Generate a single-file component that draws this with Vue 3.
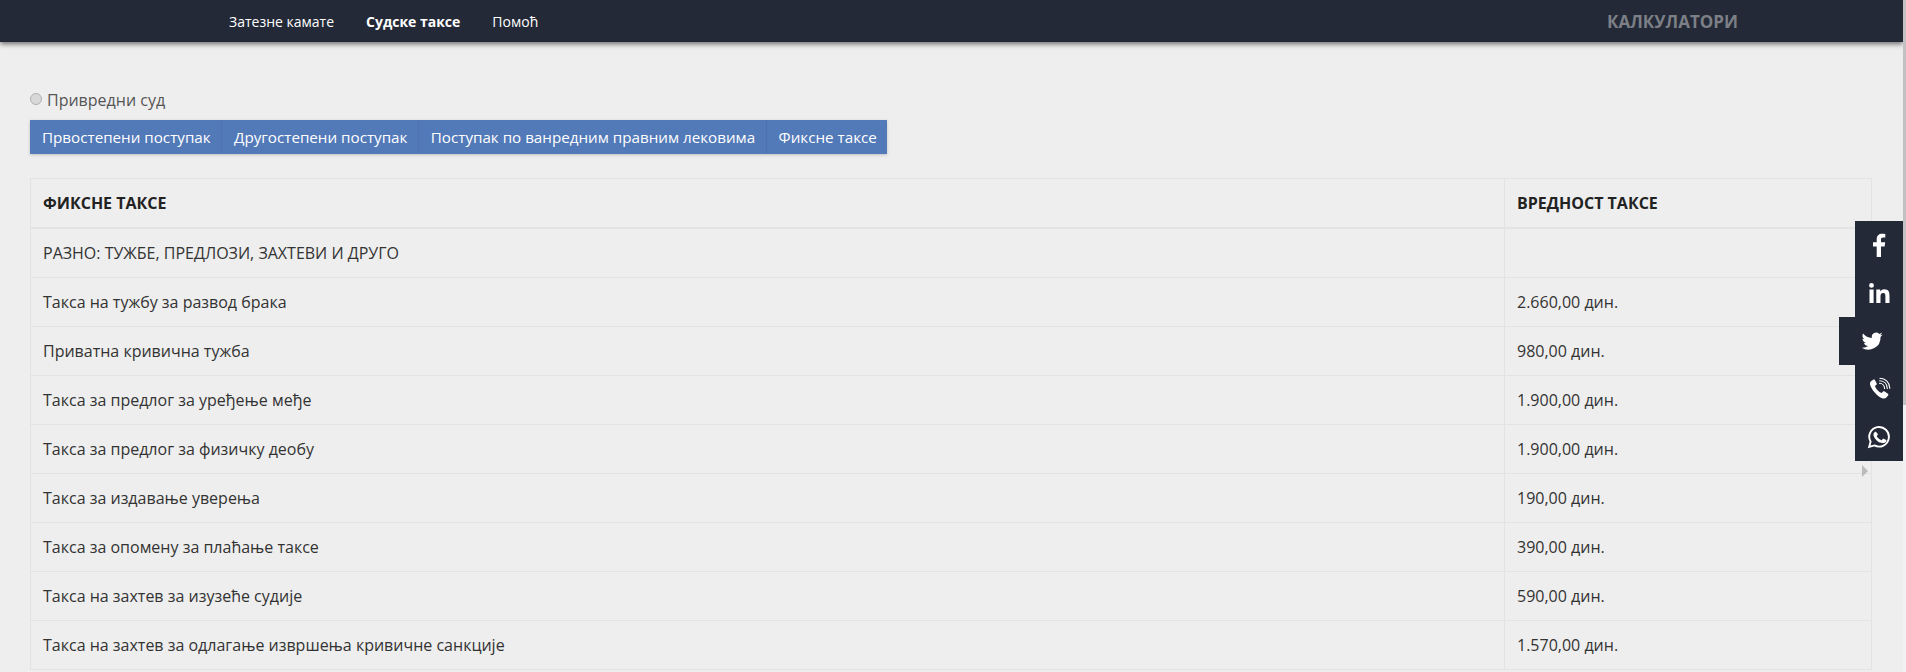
<script setup>
const tabs = ['Првостепени поступак', 'Другостепени поступак', 'Поступак по ванредним правним лековима', 'Фиксне таксе']
const rows = [
  ['РАЗНО: ТУЖБЕ, ПРЕДЛОЗИ, ЗАХТЕВИ И ДРУГО', ''],
  ['Такса на тужбу за развод брака', '2.660,00 дин.'],
  ['Приватна кривична тужба', '980,00 дин.'],
  ['Такса за предлог за уређење међе', '1.900,00 дин.'],
  ['Такса за предлог за физичку деобу', '1.900,00 дин.'],
  ['Такса за издавање уверења', '190,00 дин.'],
  ['Такса за опомену за плаћање таксе', '390,00 дин.'],
  ['Такса на захтев за изузеће судије', '590,00 дин.'],
  ['Такса на захтев за одлагање извршења кривичне санкције', '1.570,00 дин.'],
]
</script>

<template>
  <div class="shell">
    <div class="page">
      <header class="topbar">
        <nav class="nav">
          <a>Затезне камате</a>
          <a class="active">Судске таксе</a>
          <a>Помоћ</a>
        </nav>
        <div class="brand">КАЛКУЛАТОРИ</div>
      </header>

      <main class="content">
        <label class="court"><span class="radio"></span>Привредни суд</label>
        <div class="tabs">
          <button v-for="t in tabs" :key="t" class="tab">{{ t }}</button>
        </div>
        <table class="fees">
          <thead>
            <tr><th class="c1">ФИКСНЕ ТАКСЕ</th><th>ВРЕДНОСТ ТАКСЕ</th></tr>
          </thead>
          <tbody>
            <tr v-for="r in rows" :key="r[0]"><td class="c1">{{ r[0] }}</td><td>{{ r[1] }}</td></tr>
          </tbody>
        </table>
      </main>

      <aside class="social">
        <a class="si"><svg viewBox="0 0 24 24" width="24" height="24"><path fill="#fff" d="M14 24V13.400h3.600l.6-4.200H14V6.600c0-1.200.4-2 2.100-2h2.200V.9C17.900.8 16.600.7 15.100.7 11.900.7 9.700 2.600 9.700 6.200v3H6v4.200h3.700V24z"/></svg></a>
        <a class="si"><svg viewBox="0 0 24 24" width="24" height="24"><path fill="#fff" d="M2.500 8.500h4.100V22H2.500zM4.500 2a2.400 2.400 0 1 1 0 4.800 2.400 2.400 0 0 1 0-4.800zM9.300 8.500h3.900v1.900c.6-1.100 2-2.200 4.100-2.200 4.300 0 5.200 2.800 5.200 6.500V22h-4.100v-6.500c0-1.600 0-3.600-2.200-3.600s-2.700 1.700-2.700 3.500V22H9.300z"/></svg></a>
        <a class="si tw"><svg viewBox="0 0 24 24" width="22" height="22"><path fill="#fff" d="M23.500 4.900c-.8.400-1.700.6-2.700.8 1-.6 1.700-1.500 2.100-2.600-.9.500-1.900.9-3 1.200a4.700 4.700 0 0 0-8 4.300C8 8.400 4.500 6.500 2.200 3.700 1 5.900 1.600 8.600 3.700 10c-.8 0-1.500-.2-2.100-.6 0 2.300 1.600 4.200 3.800 4.700-.7.200-1.400.2-2.100.1.600 1.900 2.300 3.200 4.400 3.300A9.500 9.500 0 0 1 .7 19.400 13.400 13.400 0 0 0 21.300 7.500c.9-.7 1.700-1.600 2.200-2.600z"/></svg></a>
        <a class="si"><svg viewBox="0 0 24 24" width="24" height="24"><path fill="#fff" d="M6.600 2.600 4.200 4C2.800 5 2.700 6.900 3.500 9c1.500 4 6.400 9.600 10.900 11.900 2 1 3.800 1 5-.3l1.700-2c.5-.6.400-1.300-.2-1.800l-3.300-2.300c-.6-.4-1.300-.3-1.800.2l-1.200 1.300c-2.800-1-5.700-4.200-6.700-7l1.300-1c.6-.5.700-1.200.4-1.800L7.900 2.900c-.3-.5-.9-.6-1.300-.3z"/><g fill="none" stroke="#fff" stroke-width="1.100" stroke-linecap="round"><path d="M12.500 6.200c2.900.1 5 2.400 5.100 5.300"/><path d="M12.700 3.700c4.400.1 7.400 3.300 7.600 7.700"/><path d="M12.900 1.300c5.700.1 9.700 4.200 9.900 9.900"/></g></svg></a>
        <a class="si"><svg viewBox="0 0 24 24" width="24" height="24"><path fill="none" stroke="#fff" stroke-width="1.900" d="M2.200 21.800l1.400-5.100A9.800 9.800 0 1 1 7.400 20.400z"/><path fill="#fff" d="M8.600 6.900c-.3 0-.7.100-1.100.5-.4.500-1.300 1.300-1.300 3s1.300 3.500 1.500 3.700c.2.200 2.600 4.100 6.400 5.400 3.100 1.100 3.800.6 4.500.5.700-.1 2.100-.9 2.400-1.700.3-.8.300-1.500.2-1.700-.1-.2-.3-.2-.7-.4l-2.500-1.200c-.3-.1-.6-.2-.8.2l-1.100 1.400c-.2.200-.4.300-.8.100-.4-.2-1.600-.6-3-1.800-1.100-1-1.900-2.200-2.100-2.600-.2-.4 0-.6.200-.8l.9-1.300c.1-.2.1-.5 0-.7L9.500 7.400c-.3-.5-.5-.5-.9-.5z" transform="translate(1.100 .8) scale(.86)"/></svg></a>
        <span class="arrow"></span>
      </aside>
    </div>
    <div class="scroll"><div class="thumb"></div></div>
  </div>
</template>

<style>
html, body { margin: 0; background: #eee; overflow: hidden; }
</style>

<style scoped>
.shell { display: flex; height: 672px; overflow: hidden; }
.page {
  position: relative;
  flex: 0 0 1903px;
  height: 672px;
  overflow: hidden;
  background: #eee;
  font-family: "Open Sans", sans-serif;
  font-size: 16px;
  color: #333;
}
.scroll { flex: 0 0 3px; height: 672px; background: #f1f1f1; }
.thumb { height: 405px; background: #c1c1c1; }
.topbar {
  height: 42px;
  background: #232937;
  box-shadow: 0 2px 5px rgba(0, 0, 0, .55);
  display: flex;
  align-items: center;
  justify-content: space-between;
  position: relative;
}
.nav { display: flex; gap: 32px; padding-left: 229px; color: #fff; }
.nav a { font-size: 14px; }
.nav .active { font-weight: 700; }
.brand { font-size: 17px; font-weight: 700; color: #7c7f86; padding-right: 165px; }
.content { padding: 0 30px; }
.court { display: flex; align-items: center; gap: 5px; margin-top: 48px; height: 20px; color: #555; font-size: 16px; }
.radio { width: 12px; height: 12px; border-radius: 50%; background: #d8d8d8; border: 1px solid #b0b0b0; box-sizing: border-box; margin-top: -2px; }
.tabs { display: inline-flex; margin-top: 10px; background: #5279b8; box-shadow: 0 1px 3px rgba(0,0,0,.2); vertical-align: top; }
.tab {
  border: 0;
  border-right: 1px solid #4c72b0;
  background: #5279b8;
  color: #fff;
  font: 15.2px "Open Sans", sans-serif;
  height: 34px;
  padding: 0 10.4px 0 12px;
}
.tab:last-child { border-right: 0; }
.fees {
  display: table;
  margin-top: 24px;
  width: 1842px;
  border-collapse: collapse;
  table-layout: fixed;
  color: #333;
}
.fees th, .fees td { border: 1px solid #e3e3e3; padding: 0 12px; text-align: left; height: 48px; }
.fees th { font-weight: 700; color: #222; border-bottom-width: 2px; height: 48px; }
.fees .c1 { width: 1449px; }
.social { position: absolute; right: 0; top: 221px; width: 48px; }
.si { display: flex; align-items: center; justify-content: center; width: 48px; height: 48px; background: #232937; }
.tw { width: 64px; margin-left: -16px; box-sizing: border-box; padding-left: 2px; }
.arrow { position: absolute; left: 7px; top: 244px; border-left: 6px solid #bbb; border-top: 6px solid transparent; border-bottom: 6px solid transparent; }
</style>
